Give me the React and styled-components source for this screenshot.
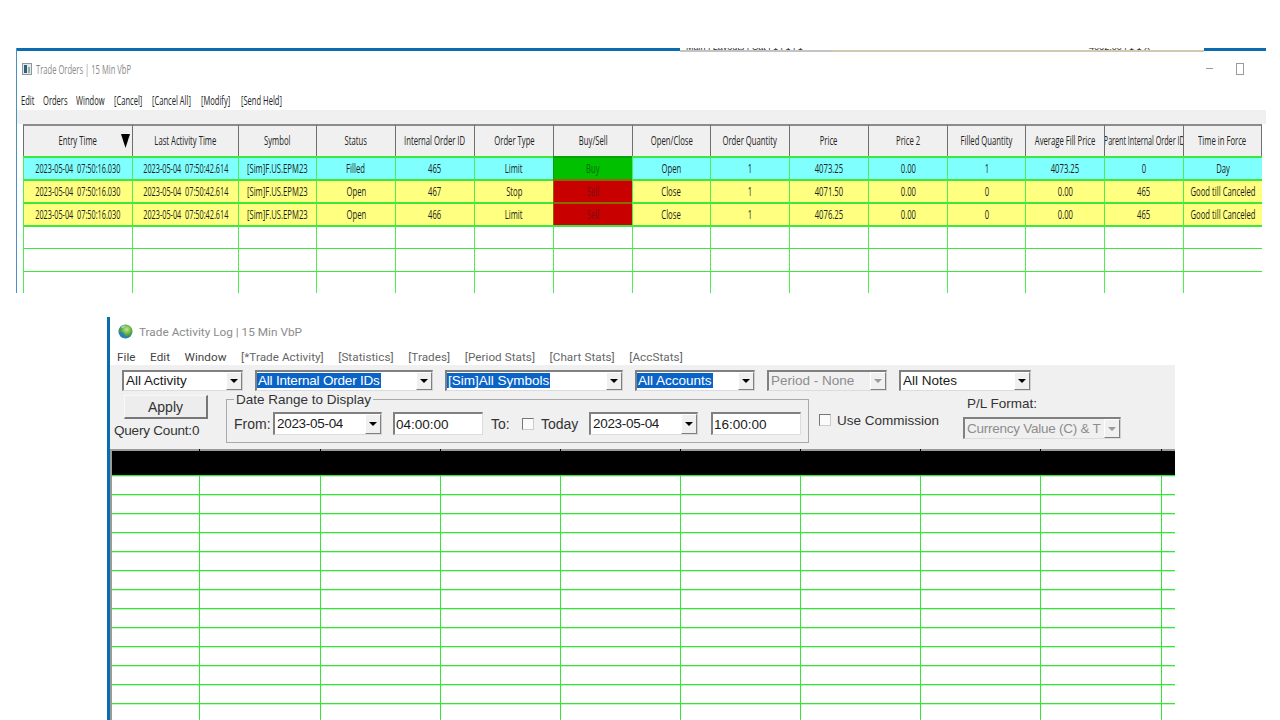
import React from 'react';
import styled, { createGlobalStyle } from 'styled-components';

const Global = createGlobalStyle`
  html, body { margin: 0; padding: 0; background: #fff; }
  body { width: 1280px; height: 720px; overflow: hidden; font-family: "Open Sans", "Liberation Sans", sans-serif; }
`;

const Page = styled.div`
  width: 1280px; height: 720px; overflow: hidden; background: #fff;
  display: flex; flex-direction: column;
`;

/* ---------- top window ---------- */
const OrdersWindow = styled.section`
  margin: 48px 0 0 16px; width: 1250px; height: 245px; flex: none;
  display: flex; flex-direction: column; overflow: hidden; position: relative;
  border-left: 1px solid #4d8fbd; box-sizing: border-box;
`;
const TopEdge = styled.div`
  height: 4px; flex: none; display: flex; overflow: hidden;
`;
const Blue = styled.div`
  background: #0c6dae; height: 3px; width: ${p => p.$w}px; flex: ${p => p.$w ? 'none' : 1};
`;
const ChartScrap = styled.div`
  flex: none; height: 4px; box-sizing: border-box; overflow: hidden; width: ${p => p.$w}px;
  border-bottom: 2px solid ${p => p.$line}; display: flex; justify-content: ${p => p.$end ? 'flex-end' : 'flex-start'};
`;
const ScrapText = styled.span`
  font-size: 9px; line-height: 8px; margin: -5px ${p => p.$r || 0}px 0 ${p => p.$l || 0}px; color: #333; white-space: nowrap; font-family: "Liberation Sans", sans-serif;
`;
const OrdersTitleBar = styled.div`
  height: 33px; flex: none; box-sizing: border-box; display: flex; align-items: center; padding: 0 22px 0 5px;
`;
const Narrow = styled.span`
  display: inline-block; transform: scaleX(${p => p.$x || 0.57}); transform-origin: ${p => p.$o || 'center'};
  white-space: pre; flex: none;
`;
const OrdersTitle = styled.div`
  font-size: 13px; color: #8a8a8a; margin-left: 4px; width: 200px;
`;
const WindowButtons = styled.div`
  margin-left: auto; display: flex; align-items: center; gap: 23px;
`;
const Minimize = styled.i`
  width: 7px; height: 1px; background: #9a9a9a; display: block;
`;
const Maximize = styled.i`
  width: 6px; height: 10px; border: 1px solid #9a9a9a; display: block;
`;
const OrdersMenu = styled.nav`
  height: 25px; flex: none; box-sizing: border-box; display: flex; align-items: center; padding: 4px 0 0 4px; font-size: 13.5px; color: #222;
`;
const OrdersMenuItem = styled.span`
  flex: none; width: ${p => p.$w}px; display: block; overflow: visible;
`;
const OrdersGrey = styled.div`
  height: 14px; flex: none; background: #f0f0f0;
`;
const OrdersTable = styled.div`
  flex: 1; margin-left: 6px; width: 1239px; display: grid;
  grid-template-columns: 109px 106px 78px 79px 79px 79px 79px 78px 79px 79px 79px 78px 79px 79px 79px;
  grid-template-rows: 32px 23px 23px 23px 23px 23px 23px;
  overflow: hidden;
`;
const Head = styled.div`
  background: #f0f0f0; border-top: 2px solid #8b8b8b; border-left: 1px solid #6f6f6f;
  ${p => p.$last && 'border-right: 1px solid #6f6f6f;'}
  box-sizing: border-box; padding-bottom: 2px;
  display: flex; align-items: center; justify-content: center; font-size: 13.5px; color: #222;
  position: relative; overflow: hidden;
`;
const SortMark = styled.svg`
  position: absolute; right: 2px; top: 8px; width: 9px; height: 14px;
`;
const Cell = styled.div`
  background: ${p => p.$bg || '#fff'}; box-sizing: border-box;
  border-left: 1px solid ${p => p.$edge || '#4fee4f'};
  border-top: ${p => p.$thick ? 2 : 1}px solid ${p => p.$edge || '#3de83d'};
  display: flex; align-items: center; justify-content: center; padding-bottom: 1px;
  font-size: 13.5px; color: ${p => p.$c || '#1c1c1c'};
  overflow: hidden;
`;

/* ---------- bottom window ---------- */
const LogWindow = styled.section`
  margin: 24px 0 0 107px; width: 1068px; height: 403px; flex: none;
  border-left: 3px solid #0c6dae; box-sizing: border-box;
  display: flex; flex-direction: column; overflow: hidden;
`;
const LogTitleBar = styled.div`
  height: 29px; flex: none; box-sizing: border-box; display: flex; align-items: center; padding: 0 0 0 9px; gap: 6px;
  font-family: Roboto, "Open Sans", sans-serif; font-size: 11.8px; color: #8b8b8b;
`;
const LogMenu = styled.nav`
  height: 19px; flex: none; display: flex; gap: 14.5px; padding: 2px 0 0 7px; box-sizing: border-box; align-items: center;
  font-family: Roboto, "Open Sans", sans-serif; font-size: 11.7px; letter-spacing: .05px;
`;
const LogMenuItem = styled.span`
  color: ${p => p.$bracket ? '#666' : '#444'}; white-space: nowrap;
`;
const ToolPanel = styled.div`
  height: 84px; flex: none; background: #f0f0f0;
  display: flex; flex-direction: column; font-family: "Liberation Sans", Arial, sans-serif; font-size: 13.5px; color: #333;
`;
const ComboRow = styled.div`
  display: flex; gap: 12px; padding: 5px 0 0 12px; height: 21px; flex: none;
`;
const Combo = styled.div`
  width: ${p => p.$w}px; height: ${p => p.$h || 21}px; box-sizing: border-box; flex: none;
  background: ${p => p.$off ? '#f0f0f0' : '#fff'};
  border-top: 2px solid #808080; border-left: 2px solid #808080;
  border-right: 1px solid #cfcfcf; border-bottom: 1px solid #dcdcdc;
  display: flex; align-items: center; justify-content: space-between; overflow: hidden;
  color: ${p => p.$off ? '#8d8d8d' : '#1a1a1a'};
  letter-spacing: ${p => p.$ls || 0}px;
`;
const ComboText = styled.span`
  padding-left: ${p => p.$sel ? 0 : 2}px; white-space: nowrap; overflow: hidden; line-height: 17px; margin-bottom: 1px;
`;
const Selected = styled.span`
  background: #0a64c8; color: #fff; display: inline-block; line-height: 15px; padding: 0 1px;
`;
const ArrowButton = styled.span`
  width: 16px; height: 100%; flex: none; background: #f0f0f0; box-sizing: border-box;
  border-right: 1px solid #808080; border-bottom: 1px solid #808080;
  border-top: 1px solid #fff; border-left: 1px solid #fff;
  display: flex; align-items: center; justify-content: center;
`;
const Tri = styled.i`
  width: 0; height: 0; display: block;
  border-left: 4px solid transparent; border-right: 4px solid transparent;
  border-top: 4px solid ${p => p.$off ? '#9a9a9a' : '#000'};
`;
const SecondRow = styled.div`
  display: flex; flex: 1; padding-left: 4px; min-height: 0;
`;
const ApplyColumn = styled.div`
  width: 112px; flex: none; display: flex; flex-direction: column; align-items: flex-start;
`;
const ApplyButton = styled.div`
  margin: 4px 0 0 10px; width: 84px; height: 24px; box-sizing: border-box; font-size: 14px;
  background: #ededed; border: 1px solid #f8f8f8; border-right: 2px solid #777; border-bottom: 2px solid #777;
  display: flex; align-items: center; justify-content: center; color: #333;
`;
const QueryCount = styled.div`
  margin-top: 4px; color: #333; white-space: nowrap; letter-spacing: -.2px;
`;
const DateGroup = styled.fieldset`
  margin: 1px 0 0; padding: 4px 7px 0; width: 583px; height: 51px; box-sizing: border-box; flex: none;
  border: 1px solid #a9a9a9; border-radius: 0;
`;
const DateLegend = styled.legend`
  padding: 0 2px; font-size: 13.5px; line-height: 15px; color: #333;
`;
const DateLine = styled.div`
  display: flex; align-items: center; height: 23px; margin-top: 1px;
`;
const Label = styled.span`
  white-space: nowrap; flex: none; width: ${p => p.$w}px; color: ${p => p.$c || '#333'}; font-size: 14px;
`;
const Gap = styled.span`
  flex: none; width: ${p => p.$w}px;
`;
const TimeBox = styled.div`
  width: ${p => p.$w}px; height: 23px; flex: none; box-sizing: border-box; background: #fff;
  border-top: 2px solid #808080; border-left: 2px solid #808080;
  border-right: 1px solid #dcdcdc; border-bottom: 1px solid #dcdcdc;
  display: flex; align-items: center; padding-left: 1px; color: #1a1a1a;
`;
const Check = styled.i`
  width: 12px; height: 12px; flex: none; display: block; background: #fbfbfb;
  border: 1px solid #777; border-right-color: #ccc; border-bottom-color: #ccc; box-sizing: border-box;
`;
const Commission = styled.div`
  margin: 21px 0 0 10px; display: flex; align-items: center; gap: 6px; height: 16px; width: 144px; flex: none; white-space: nowrap;
`;
const PlColumn = styled.div`
  display: flex; flex-direction: column; align-items: flex-start; padding-top: 5px;
`;
const PlLabel = styled.div`
  margin-left: 4px; height: 21px; line-height: 16px; white-space: nowrap;
`;
const LogTable = styled.div`
  flex: 1; border-left: 2px solid #9a9a9a; overflow: hidden;
  display: grid;
  grid-template-columns: 87px 121px 120px 120px 120px 120px 120px 120px 121px 14px;
  grid-template-rows: 26px;
  grid-auto-rows: 19px;
`;
const BlackHead = styled.div`
  background: #000; box-sizing: border-box; position: relative; border-top: 2px solid #9b9b9b;
  &::before {
    content: ''; position: absolute; left: 0; top: -2px; width: 1px; height: 2px;
    background: ${p => p.$first ? 'transparent' : '#000'};
  }
`;
const LogCell = styled.div`
  background: #fff; box-sizing: border-box;
  border-left: ${p => p.$first ? 'none' : '1px solid #33e633'}; border-top: 1px solid #33e633;
  box-shadow: inset 0 1px 0 rgba(60, 230, 60, .3);
`;

/* ---------- data ---------- */
const cols = ['Entry Time','Last Activity Time','Symbol','Status','Internal Order ID','Order Type','Buy/Sell','Open/Close','Order Quantity','Price','Price 2','Filled Quantity','Average Fill Price','Parent Internal Order ID','Time in Force'];
const T1 = '2023-05-04  07:50:16.030', T2 = '2023-05-04  07:50:42.614', S = '[Sim]F.US.EPM23';
const rows = [
  { bg: '#80ffff', v: [T1,T2,S,'Filled','465','Limit','Buy','Open','1','4073.25','0.00','1','4073.25','0','Day'] },
  { bg: '#ffff80', v: [T1,T2,S,'Open','467','Stop','Sell','Close','1','4071.50','0.00','0','0.00','465','Good till Canceled'] },
  { bg: '#ffff80', v: [T1,T2,S,'Open','466','Limit','Sell','Close','1','4076.25','0.00','0','0.00','465','Good till Canceled'] },
];
const sideStyle = { Buy: ['#00c000', '#0a6a0a', '#0aa00a'], Sell: ['#c80000', '#7a1010', '#8a6a00'] };
const ordersMenu = [['Edit',22],['Orders',33],['Window',38],['[Cancel]',38],['[Cancel All]',49],['[Modify]',40],['[Send Held]',50]];
const logMenu = ['File','Edit','Window','[*Trade Activity]','[Statistics]','[Trades]','[Period Stats]','[Chart Stats]','[AccStats]'];

const ComboBox = ({ w, h, text, sel, off, ls }) => (
  <Combo $w={w} $h={h} $off={off} $ls={ls}>
    <ComboText $sel={sel}>{sel ? <Selected>{text}</Selected> : text}</ComboText>
    <ArrowButton><Tri $off={off} /></ArrowButton>
  </Combo>
);

const Globe = () => (
  <svg width="15" height="15" viewBox="0 0 15 15" style={{ flex: 'none', marginLeft: -1 }}>
    <defs>
      <radialGradient id="g" cx="58%" cy="35%" r="70%">
        <stop offset="0" stopColor="#c6e88a" />
        <stop offset=".5" stopColor="#5fae3c" />
        <stop offset="1" stopColor="#1e6f9e" />
      </radialGradient>
    </defs>
    <circle cx="7.5" cy="7.5" r="7" fill="url(#g)" />
    <path d="M1 9c2-2 4-1 5 1s3 3 6 1c-2 4-9 4-11-2z" fill="#2a80b8" />
    <path d="M3 3c1-1 3-2 4-1 0 2-3 3-4 1z" fill="#9ad0e8" />
  </svg>
);

const WinIcon = () => (
  <svg width="10" height="12" viewBox="0 0 10 12" style={{ flex: 'none' }}>
    <rect x=".5" y=".5" width="9" height="11" fill="#e4e8ea" stroke="#8f979d" />
    <rect x="2" y="2" width="3" height="8" fill="#2f5f7a" />
    <rect x="6" y="4" width="2" height="6" fill="#8fb49a" />
  </svg>
);

export default function App() {
  return (
    <Page>
      <Global />
      <OrdersWindow>
        <TopEdge>
          <Blue $w={663} />
          <ChartScrap $w={152} $line="#c4c4c4"><ScrapText $l={6}>Main | Layouts | Cat | 1 | 1 | 1</ScrapText></ChartScrap>
          <ChartScrap $w={372} $line="#cfcab0" $end><ScrapText $r={54}>4062.00 | 1 1 X</ScrapText></ChartScrap>
          <Blue />
        </TopEdge>
        <OrdersTitleBar>
          <WinIcon />
          <OrdersTitle><Narrow $o="left center" $x={0.585}>Trade Orders | 15 Min VbP</Narrow></OrdersTitle>
          <WindowButtons><Minimize /><Maximize /></WindowButtons>
        </OrdersTitleBar>
        <OrdersMenu>
          {ordersMenu.map(([t, w]) => (
            <OrdersMenuItem key={t} $w={w}><Narrow $o="left center" $x={0.56}>{t}</Narrow></OrdersMenuItem>
          ))}
        </OrdersMenu>
        <OrdersGrey />
        <OrdersTable>
          {cols.map((c, i) => (
            <Head key={c} $last={i === cols.length - 1}>
              <Narrow $x={i === 13 ? 0.53 : 0.57}>{c}</Narrow>
              {i === 0 && <SortMark viewBox="0 0 9 14"><path d="M0 0h9L4.5 14z" fill="#000" /></SortMark>}
            </Head>
          ))}
          {rows.map((r, ri) => r.v.map((v, ci) => {
            const side = ci === 6 ? sideStyle[v] : null;
            return (
              <Cell key={ri + '-' + ci} $thick $bg={side ? side[0] : r.bg} $c={side ? side[1] : undefined} $edge={side ? side[2] : undefined}>
                <Narrow $x={ci < 2 ? 0.54 : 0.57}>{v}</Narrow>
              </Cell>
            );
          }))}
          {Array.from({ length: 45 }).map((_, i) => <Cell key={'e' + i} $thick={i < 15} />)}
        </OrdersTable>
      </OrdersWindow>

      <LogWindow>
        <LogTitleBar><Globe />Trade Activity Log | 15 Min VbP</LogTitleBar>
        <LogMenu>
          {logMenu.map(m => <LogMenuItem key={m} $bracket={m[0] === '['}>{m}</LogMenuItem>)}
        </LogMenu>
        <ToolPanel>
          <ComboRow>
            <ComboBox w={121} text="All Activity" />
            <ComboBox w={178} text="All Internal Order IDs" sel ls={-0.2} />
            <ComboBox w={178} text="[Sim]All Symbols" sel />
            <ComboBox w={120} text="All Accounts" sel />
            <ComboBox w={120} text="Period - None" off />
            <ComboBox w={132} text="All Notes" />
          </ComboRow>
          <SecondRow>
            <ApplyColumn>
              <ApplyButton>Apply</ApplyButton>
              <QueryCount>Query Count:0</QueryCount>
            </ApplyColumn>
            <DateGroup>
              <DateLegend>Date Range to Display</DateLegend>
              <DateLine>
                <Label $w={39}>From:</Label>
                <ComboBox w={109} h={23} text="2023-05-04" ls={-0.3} />
                <Gap $w={11} />
                <TimeBox $w={90}>04:00:00</TimeBox>
                <Gap $w={8} />
                <Label $w={31}>To:</Label>
                <Check />
                <Gap $w={7} />
                <Label $w={48}>Today</Label>
                <ComboBox w={109} h={23} text="2023-05-04" ls={-0.3} />
                <Gap $w={13} />
                <TimeBox $w={90}>16:00:00</TimeBox>
              </DateLine>
            </DateGroup>
            <Commission><Check />Use Commission</Commission>
            <PlColumn>
              <PlLabel>P/L Format:</PlLabel>
              <ComboBox w={158} h={22} text="Currency Value (C) & T" off ls={-0.25} />
            </PlColumn>
          </SecondRow>
        </ToolPanel>
        <LogTable>
          {Array.from({ length: 10 }).map((_, i) => <BlackHead key={i} $first={i === 0} />)}
          {Array.from({ length: 140 }).map((_, i) => <LogCell key={i} $first={i % 10 === 0} />)}
        </LogTable>
      </LogWindow>
    </Page>
  );
}
